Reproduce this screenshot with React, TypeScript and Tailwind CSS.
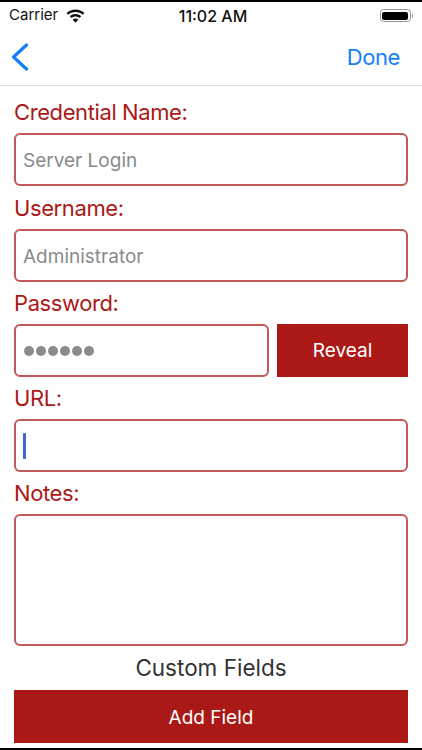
const font = { fontFamily: "Inter, 'Noto Sans', sans-serif" };

function Label({ text, first }: { text: string; first?: boolean }) {
  return (
    <div className={first ? "h-[47px] pt-[12px] text-[22px] leading-[28px] tracking-[-0.4px] text-[#ab1917]" : "h-[42px] pt-[7px] text-[22px] leading-[28px] tracking-[-0.4px] text-[#ab1917]"}>
      {text}
    </div>
  );
}

function Box({ value, children }: { value?: string; children?: React.ReactNode }) {
  return (
    <div className="flex h-[53px] items-center rounded-[6px] border-2 border-[#c4595a] bg-white px-[7px] text-[19px] text-[#8a8a8a]">
      {value ? <span className="mt-[3px]">{value}</span> : null}
      {children}
    </div>
  );
}

export default function App() {
  return (
    <div style={font} className="flex h-[750px] w-[422px] flex-col overflow-hidden bg-white">
      <div className="h-[2px] bg-black" />
      <div className="flex h-[27px] items-center justify-between pl-[9px] pr-[9px] text-[15px] text-[#111]">
        <div className="flex w-[142px] items-center gap-[8px]">
          <span>Carrier</span>
          <svg width="19" height="14" viewBox="0 0 19 14" fill="#111">
            <path d="M9.5 0.5C6 0.5 3 1.8 0.6 4l1.6 1.8C4.2 4 6.7 3 9.5 3s5.3 1 7.3 2.8L18.4 4C16 1.8 13 .5 9.5.5z" />
            <path d="M9.5 5C7.3 5 5.4 5.8 3.8 7.2l1.7 1.8C6.6 8 8 7.5 9.5 7.5S12.4 8 13.5 9l1.7-1.8C13.6 5.8 11.7 5 9.5 5z" />
            <path d="M9.5 9.6c-1.1 0-2.1.4-2.8 1.1l2.8 3 2.8-3c-.7-.7-1.7-1.1-2.8-1.1z" />
          </svg>
        </div>
        <span className="text-[16px] font-medium">11:02 AM</span>
        <div className="flex w-[138px] items-center justify-end">
          <div className="h-[13px] w-[31px] rounded-[3.5px] border border-[#999] p-[1.5px]">
            <div className="h-full w-full rounded-[2px] bg-black" />
          </div>
          <div className="ml-[1px] h-[4px] w-[1.5px] rounded-r bg-[#999]" />
        </div>
      </div>
      <div className="flex h-[57px] items-center justify-between border-b border-[#dcdcdc] pl-[11px] pr-[22px]">
        <svg width="18" height="28" viewBox="0 0 18 28" fill="none" stroke="#147efb" strokeWidth="3.2" strokeLinecap="round" strokeLinejoin="round">
          <path d="M15.5 2 2.5 14l13 12" />
        </svg>
        <span className="text-[22px] tracking-[-0.4px] text-[#147efb]">Done</span>
      </div>
      <div className="flex flex-1 flex-col px-[14px]">
        <Label text="Credential Name:" first />
        <Box value="Server Login" />
        <div className="h-[1px]" />
        <Label text="Username:" />
        <Box value="Administrator" />
        <Label text="Password:" />
        <div className="flex gap-[8px]">
          <div className="w-[255px]">
            <Box>
              <div className="flex gap-[2px] pl-[1px]">
                {[0, 1, 2, 3, 4, 5].map((i) => (
                  <span key={i} className="h-[10px] w-[10px] rounded-full bg-[#8a8a8a]" />
                ))}
              </div>
            </Box>
          </div>
          <div className="flex h-[53px] flex-1 items-center justify-center bg-[#ab1917] pt-[2px] text-[19px] text-white">Reveal</div>
        </div>
        <Label text="URL:" />
        <Box>
          <span className="h-[26px] w-[2.5px] rounded-[1px] bg-[#3f66d8]" />
        </Box>
        <Label text="Notes:" />
        <div className="h-[132px] rounded-[6px] border-2 border-[#c4595a]" />
        <div className="flex h-[44px] items-center justify-center text-[22.5px] text-[#333]">Custom Fields</div>
        <div className="flex h-[53px] items-center justify-center bg-[#ab1917] pt-[3px] text-[19px] text-white">Add Field</div>
      </div>
      <div className="h-[2px] bg-black" />
    </div>
  );
}
